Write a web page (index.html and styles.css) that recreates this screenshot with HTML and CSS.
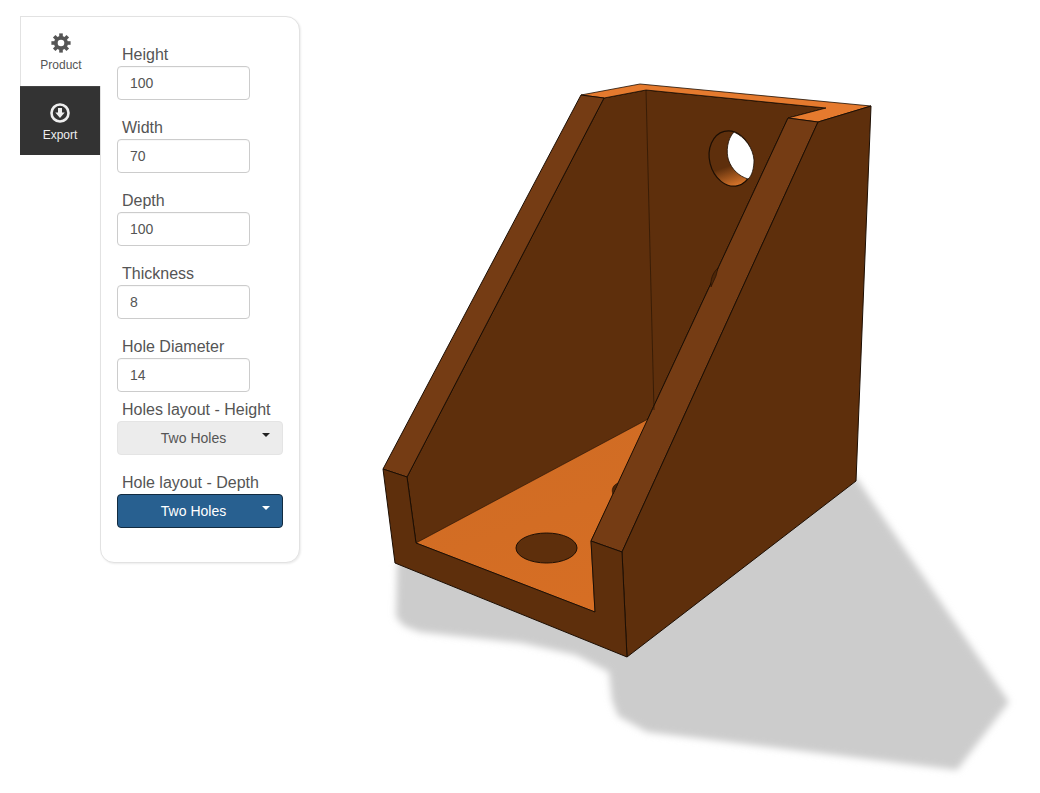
FILE: index.html
```html
<!DOCTYPE html>
<html lang="en">
<head>
<meta charset="utf-8">
<title>Product configurator</title>
<link rel="stylesheet" href="styles.css">
</head>
<body>
<div class="stage">
  <svg class="model" viewBox="0 0 1040 793" width="1040" height="793" aria-hidden="true">
    <defs>
      <filter id="soft" x="-10%" y="-10%" width="120%" height="120%"><feGaussianBlur stdDeviation="3.500"/></filter>
      <linearGradient id="wall" gradientUnits="userSpaceOnUse" x1="729" y1="165" x2="731" y2="187">
        <stop offset="0" stop-color="#5e2f0c"/>
        <stop offset="1" stop-color="#dd782c"/>
      </linearGradient>
      <linearGradient id="floor" gradientUnits="userSpaceOnUse" x1="500" y1="440" x2="560" y2="610">
        <stop offset="0" stop-color="#d06c24"/>
        <stop offset="1" stop-color="#d66e24"/>
      </linearGradient>
    </defs>
    <polygon class="shadow" points="420,540 397,565 396,617 404,626 420,632 522,643 576,655 609,672 612,700 618,716 647,732 957,770 1009,702 859,482 840,460 627,630"/>
    <polygon class="dark" points="604,98 646,90 826,108 788,118 591,541 416,543 407,477"/>
    <polygon class="floor" points="416,543 650,418 591,541 595,612"/>
    <polygon class="top" points="581,95 640,84 871,106 818,122 788,118 826,108 646,90 604,98"/>
    <polygon class="rib" points="581,95 604,98 407,477 383,469"/>
    <polygon class="rib" points="788,118 818,122 622,552 591,541"/>
    <polygon class="dark" points="871,106 856,481 627,657 622,552 818,122"/>
    <polygon class="dark" points="383,469 407,477 416,543 595,612 591,541 622,552 627,657 395,563"/>
    <line class="crease" x1="646" y1="90" x2="654" y2="410"/>
    <ellipse class="hole-wall" cx="731" cy="158.500" rx="21.500" ry="28" transform="rotate(-14 731 158.500)"/>
    <path class="hole-sky" d="M734 132C745 137 753 148 754 160C754 168 752 176 748 179C739 176 732 170 728.500 160C726 152 727 139 734 132Z"/>
    <ellipse class="hole-floor" cx="546.500" cy="548" rx="30.500" ry="15"/>
    <path class="hole-hidden" d="M718 268C713 272 710 280 711 287L716 276Z"/>
    <path class="hole-hidden" d="M618 483C613 485 611 490 613 494L616 488Z"/>
  </svg>
  <div class="card">
    <nav class="tabs">
      <a class="tab tab-active">
        <svg class="tab-icon" viewBox="0 0 20 20">
          <g class="gear">
            <rect x="8.200" y="0.400" width="3.600" height="19.200"/>
            <rect x="8.200" y="0.400" width="3.600" height="19.200" transform="rotate(45 10 10)"/>
            <rect x="8.200" y="0.400" width="3.600" height="19.200" transform="rotate(90 10 10)"/>
            <rect x="8.200" y="0.400" width="3.600" height="19.200" transform="rotate(135 10 10)"/>
            <circle cx="10" cy="10" r="7"/>
          </g>
          <circle class="gear-eye" cx="10" cy="10" r="3.300"/>
        </svg>
        <span>Product</span>
      </a>
      <a class="tab tab-dark">
        <svg class="tab-icon" viewBox="0 0 20 20"><circle cx="10" cy="10" r="8.500" fill="none" stroke="#eee" stroke-width="2.600"/><path fill="#eee" d="M8 5h4v4.500h2.700L10 15 5.300 9.500H8Z"/></svg>
        <span>Export</span>
      </a>
    </nav>
    <form class="panel">
      <div class="field"><label class="label">Height</label><input class="input" value="100"></div>
      <div class="field"><label class="label">Width</label><input class="input" value="70"></div>
      <div class="field"><label class="label">Depth</label><input class="input" value="100"></div>
      <div class="field"><label class="label">Thickness</label><input class="input" value="8"></div>
      <div class="field field-tight"><label class="label">Hole Diameter</label><input class="input" value="14"></div>
      <div class="field"><label class="label">Holes layout - Height</label><button type="button" class="select select-default">Two Holes<i class="caret"></i></button></div>
      <div class="field field-last"><label class="label">Hole layout - Depth</label><button type="button" class="select select-primary">Two Holes<i class="caret"></i></button></div>
    </form>
  </div>
</div>
</body>
</html>
```
FILE: styles.css
```css
* { box-sizing: border-box; }
html, body { margin: 0; height: 100%; background: #fff; overflow: hidden; }
body { font-family: "Liberation Sans", Arial, sans-serif; color: #555; }
.stage { position: relative; width: 1040px; height: 793px; padding: 16px 0 0 20px; }
.model { position: absolute; left: 0; top: 0; }
.shadow { fill: #ccc; filter: url(#soft); }
.dark { fill: #5e2f0c; stroke: #1c0e03; stroke-width: 1; stroke-linejoin: round; }
.rib { fill: #753c14; stroke: #1c0e03; stroke-width: 1; stroke-linejoin: round; }
.floor { fill: url(#floor); stroke: #1c0e03; stroke-width: .6; }
.top { fill: #e57a2e; stroke: #1c0e03; stroke-width: .8; }
.crease { stroke: #2a1505; stroke-width: .7; }
.hole-wall { fill: url(#wall); stroke: #1c0e03; stroke-width: 1.200; }
.hole-sky { fill: #fff; stroke: #1c0e03; stroke-width: .8; }
.hole-floor { fill: #5e2f0c; stroke: #1c0e03; stroke-width: 1; }
.hole-hidden { fill: #4d2608; stroke: #1c0e03; stroke-width: .6; }

.card { position: relative; display: flex; align-items: flex-start; width: 280px; }
.tabs { position: relative; z-index: 1; width: 81px; flex: none; margin-right: -1px; display: flex; flex-direction: column; }
.tab { display: flex; flex-direction: column; align-items: center; height: 69px; font-size: 12px; line-height: 16px; padding-top: 16px; }
.tab-active { height: 70px; padding-top: 16px; background: #fff; border: 1px solid #e2e2e2; border-width: 1px 0 0 1px; color: #555; }
.tab-dark { background: #333; color: #eee; width: 80px; border-top: 1px solid #444; }
.tab-icon { width: 20px; height: 20px; display: block; margin-bottom: 4px; }
.gear { fill: #555; }
.gear-eye { fill: #fff; }
.panel { flex: 1; height: 547px; background: #fff; border: 1px solid #e2e2e2; border-radius: 0 14px 14px 14px; box-shadow: 1px 1px 2px rgba(0, 0, 0, .08); padding: 26px 16px 0 16px; }
.field { margin-bottom: 16px; display: flex; flex-direction: column; align-items: flex-start; }
.field-tight { margin-bottom: 6px; }
.label { font-size: 16px; line-height: 23px; color: #555; padding-left: 5px; height: 23px; }
.input { width: 133px; height: 34px; border: 1px solid #ccc; border-radius: 4px; padding: 0 12px; font: 14px/20px "Liberation Sans", Arial, sans-serif; color: #555; background: #fff; box-shadow: inset 0 1px 1px rgba(0, 0, 0, .03); }
.select { position: relative; width: 166px; height: 34px; border-radius: 4px; font: 14px/20px "Liberation Sans", Arial, sans-serif; padding: 0 13px 0 0; text-align: center; }
.select-default { background: #ececec; border: 1px solid #e4e4e4; color: #555; }
.select-primary { background: #286090; border: 1px solid #122b40; color: #fff; }
.caret { position: absolute; right: 12px; top: 11px; width: 0; height: 0; border-left: 4px solid transparent; border-right: 4px solid transparent; border-top: 4px solid currentColor; }
.select-default .caret { color: #222; }
```
